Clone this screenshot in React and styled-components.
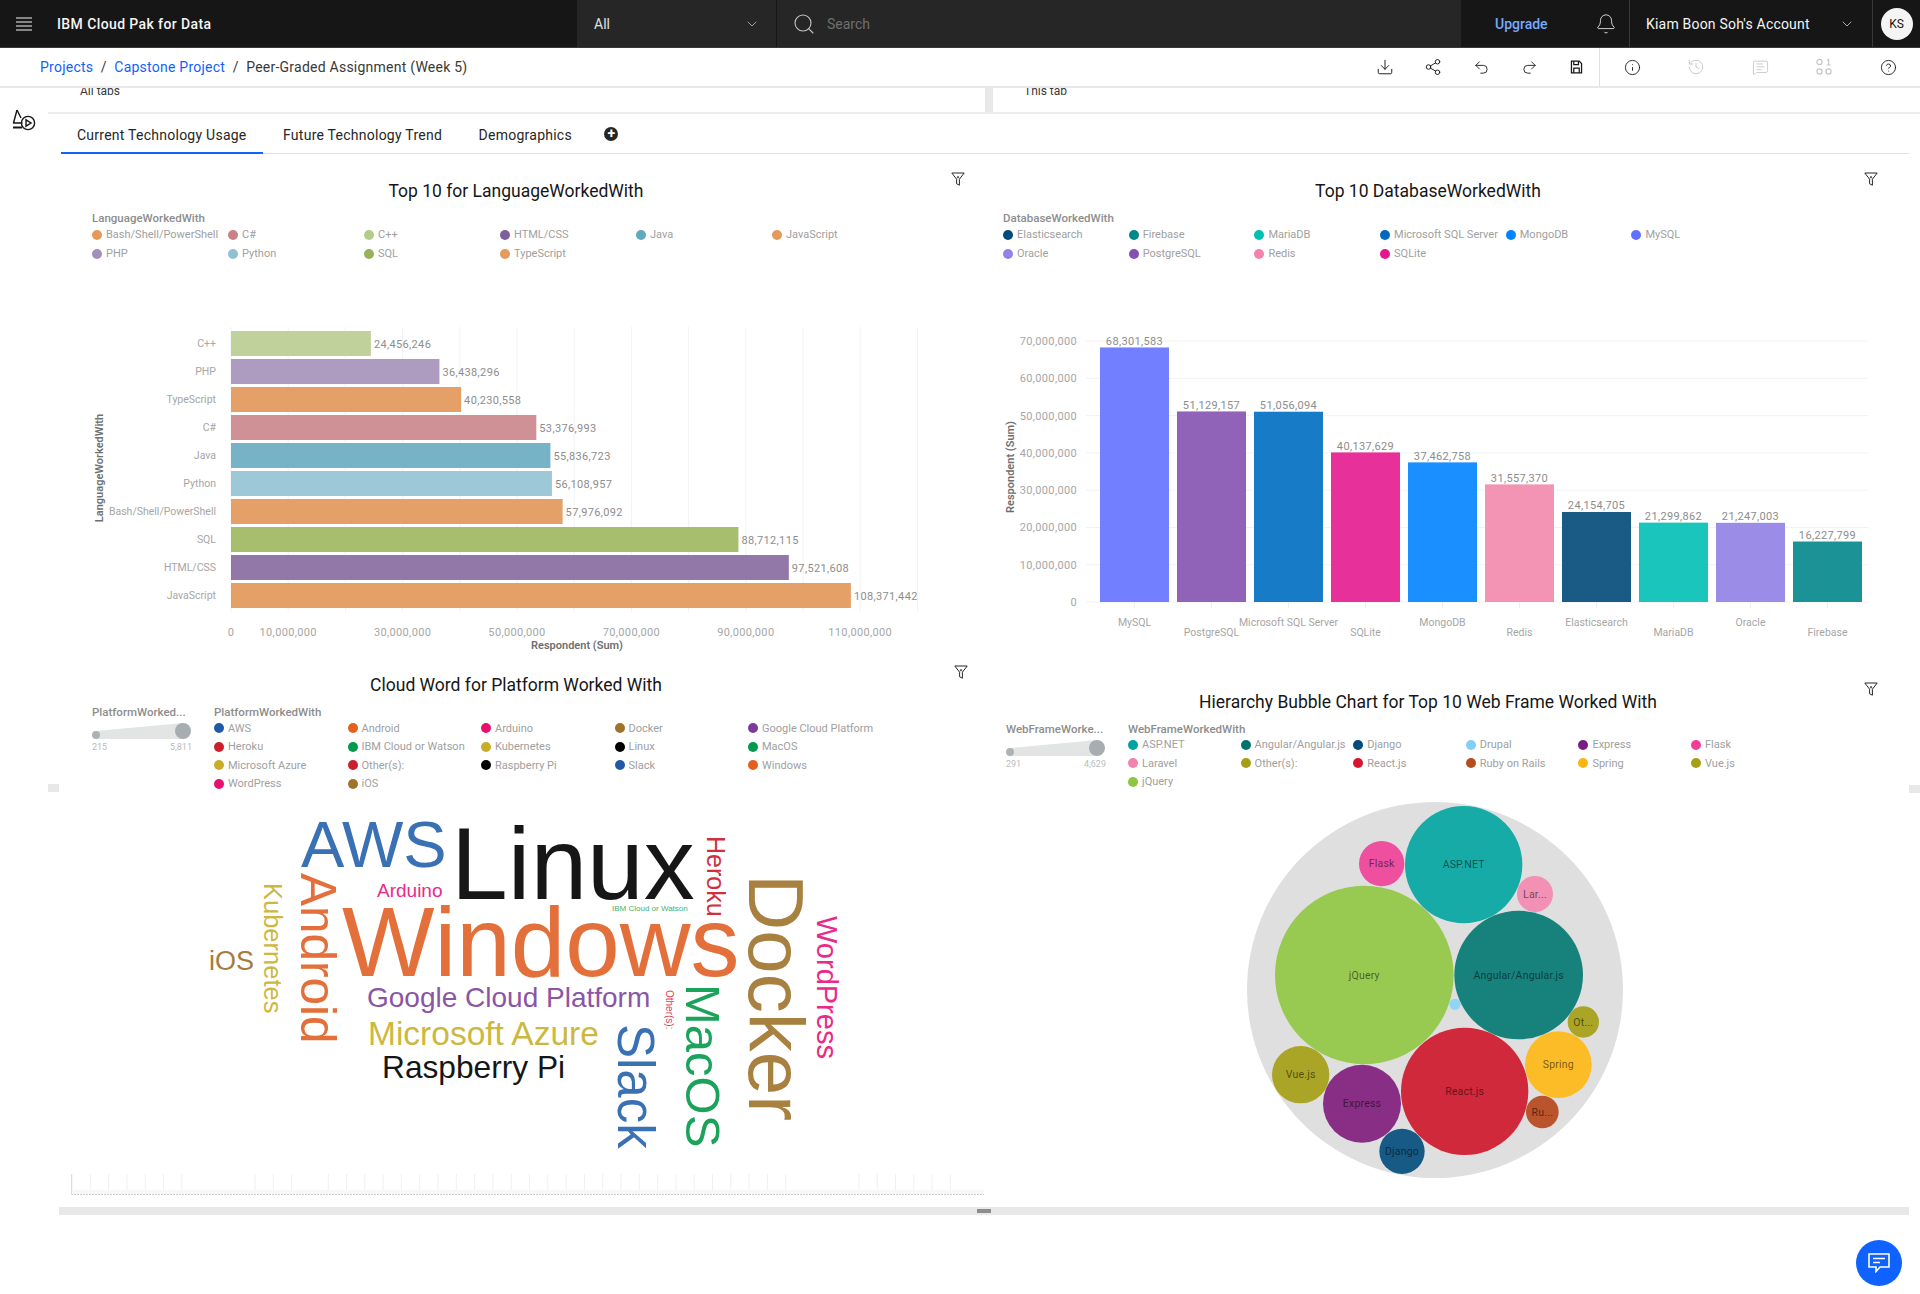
import React from 'react'
import styled, { createGlobalStyle } from 'styled-components'
import {
  Bell, ChevronDown, CircleHelp, Download, History, Info, MessageSquareText,
  Redo2, Search, Share2, Undo2,
} from 'lucide-react'

const FONT = `Roboto, "Liberation Sans", sans-serif`

const languages = [
  ['C++', 24456246, '#c0d19b'],
  ['PHP', 36438296, '#ae9cc0'],
  ['TypeScript', 40230558, '#e4a066'],
  ['C#', 53376993, '#cf9195'],
  ['Java', 55836723, '#76b3c6'],
  ['Python', 56108957, '#9cc8d8'],
  ['Bash/Shell/PowerShell', 57976092, '#e4a066'],
  ['SQL', 88712115, '#a7be6e'],
  ['HTML/CSS', 97521608, '#9178a8'],
  ['JavaScript', 108371442, '#e4a066'],
]

const databases = [
  ['MySQL', 68301583, '#7280ff'],
  ['PostgreSQL', 51129157, '#9063b8'],
  ['Microsoft SQL Server', 51056094, '#187bc8'],
  ['SQLite', 40137629, '#e8309a'],
  ['MongoDB', 37462758, '#1a8fff'],
  ['Redis', 31557370, '#f494b5'],
  ['Elasticsearch', 24154705, '#195b85'],
  ['MariaDB', 21299862, '#1ac5bb'],
  ['Oracle', 21247003, '#9b8ce8'],
  ['Firebase', 16227799, '#1a9296'],
]

const languageLegend = [
  ['Bash/Shell/PowerShell', '#e5995a'], ['C#', '#cb8086'], ['C++', '#b5cb8b'], ['HTML/CSS', '#7d5f9c'],
  ['Java', '#61a9bf'], ['JavaScript', '#e5995a'], ['PHP', '#a48fba'], ['Python', '#8ec1d3'],
  ['SQL', '#97b35a'], ['TypeScript', '#e5995a'],
]
const databaseLegend = [
  ['Elasticsearch', '#004b7c'], ['Firebase', '#00878c'], ['MariaDB', '#00bfb3'], ['Microsoft SQL Server', '#0069bf'],
  ['MongoDB', '#0083ff'], ['MySQL', '#6170ff'], ['Oracle', '#9283ea'], ['PostgreSQL', '#8450b2'],
  ['Redis', '#f383ac'], ['SQLite', '#e6178e'],
]
const platformLegend = [
  ['AWS', '#2159a8'], ['Android', '#e3601f'], ['Arduino', '#e8106f'], ['Docker', '#a0722a'], ['Google Cloud Platform', '#7b3a9c'],
  ['Heroku', '#cb1f2b'], ['IBM Cloud or Watson', '#009a4c'], ['Kubernetes', '#c8ae28'], ['Linux', '#000000'], ['MacOS', '#009a4c'],
  ['Microsoft Azure', '#c8ae28'], ['Other(s):', '#cb1f2b'], ['Raspberry Pi', '#000000'], ['Slack', '#2159a8'], ['Windows', '#e3601f'],
  ['WordPress', '#e8106f'], ['iOS', '#a0722a'],
]
const webLegend = [
  ['ASP.NET', '#00a3a1'], ['Angular/Angular.js', '#00736e'], ['Django', '#004b7c'], ['Drupal', '#82cff5'], ['Express', '#7a1c82'], ['Flask', '#ef3f98'],
  ['Laravel', '#f383ac'], ['Other(s):', '#a79f13'], ['React.js', '#d8152f'], ['Ruby on Rails', '#b44c1f'], ['Spring', '#fdb515'], ['Vue.js', '#a79f13'],
  ['jQuery', '#8dc63f'],
]

const words = [
  ['AWS', 301, 867, 65, '#3a70b4'],
  ['Linux', 451, 899, 102, '#161616'],
  ['Windows', 342, 976, 98, '#e36f3a'],
  ['Arduino', 377, 897, 19, '#ea2a8a'],
  ['IBM Cloud or Watson', 612, 911, 8, '#3cb371'],
  ['Google Cloud Platform', 367, 1007, 28, '#8b55a5'],
  ['Microsoft Azure', 368, 1045, 33.5, '#cdb83f'],
  ['Raspberry Pi', 382, 1078, 31.7, '#161616'],
  ['iOS', 209, 970, 27, '#a67c3a'],
]
const sideWords = [
  ['Kubernetes', 264, 883, 25.5, '#cdb83f'],
  ['Android', 301, 873, 49.5, '#e36f3a'],
  ['Heroku', 707, 836, 25, '#cf2f3e'],
  ['Docker', 749, 874, 78, '#a8803f'],
  ['WordPress', 817, 916, 29, '#ea2a8a'],
  ['MacOS', 686, 984, 49, '#1ba35c'],
  ['Slack', 618, 1024, 51, '#3a70b4'],
  ['Other(s):', 666, 990, 10, '#e0405a'],
]

const bubbles = [
  ['ASP.NET', 701, 221, 176, '#16aba7'],
  ['Flask', 455, 218, 68, '#ee4f9f'],
  ['Lar...', 915, 309, 54, '#f291b3'],
  ['jQuery', 403, 552, 268, '#98ca52'],
  ['Angular/Angular.js', 866, 552, 193, '#17827c'],
  ['', 675, 640, 17, '#91d5f5'],
  ['Ot...', 1060, 693, 47, '#aaa427'],
  ['Spring', 985, 821, 100, '#fcbc28'],
  ['Ru...', 937, 963, 49, '#b9542c'],
  ['React.js', 704, 901, 191, '#d0293b'],
  ['Vue.js', 212, 851, 86, '#aaa427'],
  ['Express', 396, 938, 117, '#882e85'],
  ['Django', 516, 1081, 68, '#165a85'],
]

const skippedTicks = [7, 8, 9, 13, 40, 41, 42]
const fmt = (n) => n.toLocaleString('en-US')

const GlobalStyle = createGlobalStyle`
  html, body { margin: 0; padding: 0; background: #fff; }
  body { font-family: ${FONT}; color: #161616; overflow: hidden; }
  * { box-sizing: border-box; }
`

const Page = styled.div`
  width: 1920px;
  height: 1294px;
  position: relative;
  overflow: hidden;
`

const TopBar = styled.header`
  height: 48px;
  display: flex;
  background: #161616;
  border-bottom: 1px solid #393939;
  color: #f4f4f4;
  font-size: 14px;
`
const Brand = styled.div`
  width: 577px;
  display: flex;
  align-items: center;
  gap: 25px;
  padding-left: 16px;
  font-weight: 500;
  letter-spacing: 0.4px;
`
const ScopeSelect = styled.div`
  width: 200px;
  display: flex;
  align-items: center;
  justify-content: space-between;
  padding: 0 16px 0 17px;
  background: #262626;
  border-right: 1px solid #161616;
  color: #e0e0e0;
`
const SearchBox = styled.div`
  width: 684px;
  display: flex;
  align-items: center;
  gap: 11px;
  padding-left: 15px;
  background: #262626;
  color: #6f6f6f;
`
const UpgradeArea = styled.div`
  width: 169px;
  display: flex;
  align-items: center;
  gap: 47px;
  padding-left: 34px;
  border-right: 1px solid #393939;
`
const UpgradeLink = styled.span`
  color: #78a9ff;
  font-weight: 500;
`
const Account = styled.div`
  width: 243px;
  display: flex;
  align-items: center;
  justify-content: space-between;
  padding: 0 17px 0 16px;
  border-right: 1px solid #393939;
  letter-spacing: 0.2px;
`
const AvatarCell = styled.div`
  flex: 1;
  display: flex;
  align-items: center;
  justify-content: center;
`
const Avatar = styled.div`
  width: 32px;
  height: 32px;
  border-radius: 50%;
  background: #f4f4f4;
  color: #161616;
  font-size: 12px;
  display: flex;
  align-items: center;
  justify-content: center;
`

const CrumbBar = styled.nav`
  height: 40px;
  display: flex;
  align-items: center;
  justify-content: space-between;
  border-bottom: 2px solid #e8e8e8;
  padding-left: 40px;
  font-size: 14px;
`
const Crumbs = styled.div`
  display: flex;
  gap: 7.5px;
  letter-spacing: 0.24px;
  margin-top: -1px;
`
const Crumb = styled.span`
  color: ${(p) => (p.$link ? '#0f62fe' : '#393939')};
`
const Tools = styled.div`
  display: flex;
  height: 100%;
  border-right: ${(p) => (p.$divided ? '1px solid #e0e0e0' : 'none')};
`
const ToolsWrap = styled.div`
  display: flex;
  height: 100%;
`
const ToolButton = styled.div`
  width: ${(p) => p.$w}px;
  height: 100%;
  display: flex;
  align-items: center;
  justify-content: center;
  color: ${(p) => (p.$muted ? '#c6c6c6' : '#161616')};
`

const Body = styled.div`
  display: flex;
`
const Rail = styled.aside`
  width: 48px;
  padding: 21px 0 0 12px;
  color: #161616;
`
const Main = styled.main`
  width: 1872px;
  position: relative;
`
const TabStrip = styled.div`
  height: 26px;
  display: flex;
  overflow: hidden;
  border-bottom: 2px solid #ededed;
  font-size: 12px;
  color: #393939;
`
const StripPane = styled.div`
  width: ${(p) => p.$w}px;
  padding-left: ${(p) => p.$pad}px;
  margin-top: -4.5px;
`
const Splitter = styled.div`
  width: 8px;
  background: #e8e8e8;
`
const TabBar = styled.div`
  height: 40px;
  margin: 0 11px 0 13px;
  display: flex;
  gap: 4.5px;
  border-bottom: 1px solid #e0e0e0;
  font-size: 14px;
`
const Tab = styled.div`
  height: 40px;
  padding: 3px 16px 0;
  display: flex;
  align-items: center;
  letter-spacing: 0.25px;
  color: #262626;
  border-bottom: 2px solid ${(p) => (p.$active ? '#0f62fe' : 'transparent')};
`
const AddTab = styled.div`
  width: 14px;
  height: 14px;
  margin: 13px 0 0 12px;
  border-radius: 50%;
  background: #262626;
  color: #fff;
  font-size: 14px;
  line-height: 13px;
  font-weight: 700;
  text-align: center;
`

const Dashboard = styled.div`
  display: grid;
  grid-template-columns: 912px 912px;
  grid-template-rows: 507px 539px;
  margin-left: 12px;
`
const Tile = styled.section`
  position: relative;
  padding-top: ${(p) => p.$top}px;
`
const TileTitle = styled.h2`
  margin: 0;
  height: 22px;
  font-size: 17.5px;
  line-height: 22px;
  font-weight: 400;
  text-align: center;
  color: #161616;
`
const FilterMark = styled.div`
  position: absolute;
  top: ${(p) => p.$top}px;
  right: ${(p) => p.$right}px;
  line-height: 0;
  color: #262626;
`
const LegendRow = styled.div`
  display: flex;
  margin-top: ${(p) => p.$gap}px;
  height: ${(p) => p.$height}px;
  padding-left: ${(p) => p.$pad}px;
`
const SliderColumn = styled.div`
  width: 122px;
`
const SliderValues = styled.div`
  width: 100px;
  height: 10px;
  margin-top: 1px;
  display: flex;
  justify-content: space-between;
  font-size: 9px;
  line-height: 10px;
  color: #bbb;
`
const LegendTitle = styled.div`
  height: 14px;
  font-size: 11.5px;
  line-height: 14px;
  font-weight: 500;
  color: #8d8d8d;
  white-space: nowrap;
`
const LegendBody = styled.div`
  display: grid;
  grid-template-columns: repeat(${(p) => p.$cols}, ${(p) => p.$col}px);
  grid-auto-rows: ${(p) => p.$row}px;
`
const LegendItem = styled.div`
  display: flex;
  align-items: center;
  gap: 4px;
  font-size: 11px;
  color: #a0a0a0;
  white-space: nowrap;
`
const Dot = styled.span`
  width: 10px;
  height: 10px;
  border-radius: 50%;
  flex: none;
  background: ${(p) => p.$color};
`
const ChartSvg = styled.svg`
  display: block;
  overflow: visible;
  text {
    font-family: ${FONT};
  }
`
const AxisLabel = styled.text`
  font-size: 11px;
  fill: #a6a6a6;
  letter-spacing: 0.35px;
`
const CategoryLabel = styled.text`
  font-size: 10.5px;
  fill: #a6a6a6;
`
const ValueLabel = styled.text`
  font-size: 11px;
  fill: #8d8d8d;
  letter-spacing: 0.35px;
`
const AxisTitle = styled.text`
  font-size: 11px;
  font-weight: 600;
  fill: #6f6f6f;
`
const CloudWord = styled.text`
  && {
    font-family: "Liberation Sans", Arial, sans-serif;
  }
`
const BubbleLabel = styled.text`
  font-size: 10.5px;
  fill: rgba(0, 0, 0, 0.55);
  letter-spacing: 0.2px;
`
const ResizeBar = styled.div`
  width: 1850px;
  height: 8px;
  margin: 7px 0 0 11px;
  background: #e8e8e8;
  display: flex;
  align-items: center;
  justify-content: center;
`
const ResizeGrip = styled.div`
  width: 14px;
  height: 4px;
  margin-right: 1px;
  background: #8d8d8d;
`
const SideHandle = styled.div`
  position: absolute;
  top: ${(p) => p.$top}px;
  left: ${(p) => p.$left}px;
  width: 11px;
  height: 8px;
  background: #e8e8e8;
`
const ChatButton = styled.div`
  position: absolute;
  left: 1856px;
  top: 1240px;
  width: 46px;
  height: 46px;
  border-radius: 50%;
  background: #0f62fe;
  color: #fff;
  display: flex;
  align-items: center;
  justify-content: center;
`

const MenuIcon = () => (
  <svg width="16" height="14" viewBox="0 0 16 14" stroke="currentColor" strokeWidth="1.2">
    <path d="M0 1h16M0 5h16M0 9h16M0 13h16" />
  </svg>
)
const FloppyIcon = () => (
  <svg width="13" height="14" viewBox="0 0 16 18" fill="none" stroke="currentColor" strokeWidth="1.6">
    <path d="M1.5 1.5h10l3 3v12h-13z" />
    <path d="M4.5 1.5v4.5h6V1.5M4.5 16.5v-6h7v6" />
  </svg>
)
const BitsIcon = () => (
  <svg width="16" height="18" viewBox="0 0 16 18" fill="none" stroke="currentColor" strokeWidth="1.2">
    <circle cx="3.5" cy="4" r="2.6" />
    <path d="M11 2.2 12.6 1.4V7M10.6 7h4" />
    <circle cx="3.5" cy="13.5" r="2.6" />
    <circle cx="12.5" cy="13.5" r="2.6" />
  </svg>
)
const RailIcon = () => (
  <svg width="24" height="22" viewBox="0 0 24 22" fill="none" stroke="currentColor" strokeWidth="1.4">
    <path d="M5 1 1.5 14h9" strokeLinejoin="round" />
    <path d="M5 1l4 8" />
    <path d="M1 18.5h9" strokeWidth="2" />
    <circle cx="16" cy="14" r="6.6" />
    <path d="M14 10.8v6.4l5-3.2z" />
  </svg>
)
const FilterIcon = () => (
  <svg width="14" height="14" viewBox="0 0 14 14" fill="none" stroke="currentColor" strokeWidth="1">
    <path d="M.8 1h12.4L8.4 7.2v6l-2.8-1.4V7.2z" />
    <path d="M7 4v2.4M5.8 5.2h2.4" strokeWidth=".8" />
  </svg>
)
const ChatIcon = () => (
  <svg width="22" height="20" viewBox="0 0 22 20" fill="none" stroke="currentColor" strokeWidth="1.6">
    <path d="M1 1h20v13H12l-4 4.5V14H1z" />
    <path d="M5 5.5h12M5 9.5h7" />
  </svg>
)

const Slider = ({ low, high }) => (
  <>
    <svg width="100" height="22" viewBox="0 0 100 22" style={{ display: 'block' }}>
      <path d="M4 12 91 4v16H4z" fill="#e3e5e4" />
      <circle cx="4" cy="16" r="4" fill="#aeb2b5" />
      <circle cx="91" cy="12" r="8" fill="#a8adb0" />
    </svg>
    <SliderValues><span>{low}</span><span>{high}</span></SliderValues>
  </>
)

const Legend = ({ title, items, col, row, cols = 6 }) => (
  <div>
    <LegendTitle>{title}</LegendTitle>
    <LegendBody $col={col} $row={row} $cols={cols}>
      {items.map(([name, color]) => (
        <LegendItem key={name}><Dot $color={color} />{name}</LegendItem>
      ))}
    </LegendBody>
  </div>
)

const LanguageChart = () => {
  const ticks = Array.from({ length: 13 }, (_, i) => i)
  return (
    <ChartSvg width="912" height="360" viewBox="60 300 912 360">
      {ticks.map((i) => (
        <line key={i} x1={231 + i * 57.2} x2={231 + i * 57.2} y1="327" y2="612" stroke="#f2f2f2" />
      ))}
      {languages.map(([name, value, color], i) => {
        const y = 331 + i * 28
        const w = (value / 10000000) * 57.2
        return (
          <g key={name}>
            <CategoryLabel x="216" y={y + 16} textAnchor="end">{name}</CategoryLabel>
            <rect x="231" y={y} width={w} height="25" fill={color} />
            <ValueLabel x={231 + w + 3} y={y + 16.5}>{fmt(value)}</ValueLabel>
          </g>
        )
      })}
      <AxisLabel x="231" y="636" textAnchor="middle">0</AxisLabel>
      {[1, 3, 5, 7, 9, 11].map((n) => (
        <AxisLabel key={n} x={231 + n * 57.2} y="636" textAnchor="middle">{fmt(n * 10000000)}</AxisLabel>
      ))}
      <AxisTitle x="577" y="649" textAnchor="middle">Respondent (Sum)</AxisTitle>
      <AxisTitle transform="translate(103 468) rotate(-90)" textAnchor="middle">LanguageWorkedWith</AxisTitle>
    </ChartSvg>
  )
}

const DatabaseChart = () => {
  const ticks = Array.from({ length: 8 }, (_, i) => i)
  return (
    <ChartSvg width="912" height="360" viewBox="972 300 912 360">
      {ticks.map((i) => {
        const y = 602 - i * 37.27
        return (
          <g key={i}>
            <line x1="1086" x2="1868" y1={y} y2={y} stroke="#f2f2f2" />
            <AxisLabel x="1077" y={y + 4} textAnchor="end">{fmt(i * 10000000)}</AxisLabel>
          </g>
        )
      })}
      {databases.map(([name, value, color], i) => {
        const x = 1100 + i * 77
        const h = (value / 10000000) * 37.27
        return (
          <g key={name}>
            <line x1={x + 34.5} x2={x + 34.5} y1="602" y2="608" stroke="#eee" />
            <rect x={x} y={602 - h} width="69" height={h} fill={color} />
            <ValueLabel x={x + 34.5} y={602 - h - 2.5} textAnchor="middle">{fmt(value)}</ValueLabel>
            <CategoryLabel x={x + 34.5} y={i % 2 ? 636 : 626} textAnchor="middle">{name}</CategoryLabel>
          </g>
        )
      })}
      <AxisTitle transform="translate(1014 467) rotate(-90)" textAnchor="middle">Respondent (Sum)</AxisTitle>
    </ChartSvg>
  )
}

const WordCloud = () => {
  const ticks = Array.from({ length: 49 }, (_, i) => i).filter((i) => !skippedTicks.includes(i))
  return (
    <ChartSvg width="912" height="400" viewBox="60 800 912 400">
      {words.map(([text, x, y, size, color]) => (
        <CloudWord key={text} x={x} y={y} fontSize={size} fill={color}>{text}</CloudWord>
      ))}
      {sideWords.map(([text, x, y, size, color]) => (
        <CloudWord key={text} transform={`translate(${x} ${y}) rotate(90)`} fontSize={size} fill={color}>{text}</CloudWord>
      ))}
      {ticks.map((i) => (
        <line key={i} x1={72 + i * 18.3} x2={72 + i * 18.3} y1="1174" y2="1194" stroke="#f0f0f0" />
      ))}
      <rect x="71" y="1190" width="913" height="4" fill="#f7f7f7" />
      <line x1="71" x2="984" y1="1194.5" y2="1194.5" stroke="#ccc" strokeDasharray="2 1" />
      <line x1="71.5" x2="71.5" y1="1174" y2="1195" stroke="#ddd" />
    </ChartSvg>
  )
}

const BubbleChart = () => (
  <ChartSvg width="912" height="400" viewBox="972 800 912 400">
    <circle cx="1435" cy="990" r="188" fill="#dfdfdf" />
    {bubbles.map(([label, cx, cy, r, color]) => (
      <g key={`${label}${cx}`}>
        <circle cx={1230 + cx / 3} cy={791 + cy / 3} r={r / 3} fill={color} />
        {label && (
          <BubbleLabel x={1230 + cx / 3} y={791 + cy / 3 + 3.5} textAnchor="middle">{label}</BubbleLabel>
        )}
      </g>
    ))}
  </ChartSvg>
)

export default function App() {
  return (
    <Page>
      <GlobalStyle />
      <TopBar>
        <Brand><MenuIcon />IBM Cloud Pak for Data</Brand>
        <ScopeSelect>All<ChevronDown size={16} strokeWidth={1} /></ScopeSelect>
        <SearchBox><Search size={24} strokeWidth={1.1} color="#c6c6c6" />Search</SearchBox>
        <UpgradeArea>
          <UpgradeLink>Upgrade</UpgradeLink>
          <Bell size={22} strokeWidth={1} color="#e0e0e0" />
        </UpgradeArea>
        <Account>Kiam Boon Soh's Account<ChevronDown size={16} strokeWidth={1} /></Account>
        <AvatarCell><Avatar>KS</Avatar></AvatarCell>
      </TopBar>

      <CrumbBar>
        <Crumbs>
          <Crumb $link>Projects</Crumb><Crumb>/</Crumb>
          <Crumb $link>Capstone Project</Crumb><Crumb>/</Crumb>
          <Crumb>Peer-Graded Assignment (Week 5)</Crumb>
        </Crumbs>
        <ToolsWrap>
          <Tools $divided>
            <ToolButton $w={48}><Download size={18} strokeWidth={1.25} /></ToolButton>
            <ToolButton $w={48}><Share2 size={18} strokeWidth={1.25} /></ToolButton>
            <ToolButton $w={48}><Undo2 size={17} strokeWidth={1.25} /></ToolButton>
            <ToolButton $w={48}><Redo2 size={17} strokeWidth={1.25} /></ToolButton>
            <ToolButton $w={46}><FloppyIcon /></ToolButton>
          </Tools>
          <Tools>
            <ToolButton $w={64}><Info size={17} strokeWidth={1.25} /></ToolButton>
            <ToolButton $w={64} $muted><History size={18} strokeWidth={1.25} /></ToolButton>
            <ToolButton $w={64} $muted><MessageSquareText size={17} strokeWidth={1.25} /></ToolButton>
            <ToolButton $w={64} $muted><BitsIcon /></ToolButton>
            <ToolButton $w={64}><CircleHelp size={17} strokeWidth={1.25} /></ToolButton>
          </Tools>
        </ToolsWrap>
      </CrumbBar>

      <Body>
        <Rail><RailIcon /></Rail>
        <Main>
          <TabStrip>
            <StripPane $w={937} $pad={32}>All tabs</StripPane>
            <Splitter />
            <StripPane $w={927} $pad={31}>This tab</StripPane>
          </TabStrip>
          <TabBar>
            <Tab $active>Current Technology Usage</Tab>
            <Tab>Future Technology Trend</Tab>
            <Tab>Demographics</Tab>
            <AddTab>+</AddTab>
          </TabBar>

          <Dashboard>
            <Tile $top={26}>
              <TileTitle>Top 10 for LanguageWorkedWith</TileTitle>
              <FilterMark $top={18} $right={7}><FilterIcon /></FilterMark>
              <LegendRow $gap={9} $height={89} $pad={32}>
                <Legend title="LanguageWorkedWith" items={languageLegend} col={136} row={19} />
              </LegendRow>
              <LanguageChart />
            </Tile>
            <Tile $top={26}>
              <TileTitle>Top 10 DatabaseWorkedWith</TileTitle>
              <FilterMark $top={18} $right={6}><FilterIcon /></FilterMark>
              <LegendRow $gap={9} $height={89} $pad={31}>
                <Legend title="DatabaseWorkedWith" items={databaseLegend} col={125.7} row={19} />
              </LegendRow>
              <DatabaseChart />
            </Tile>
            <Tile $top={13}>
              <TileTitle>Cloud Word for Platform Worked With</TileTitle>
              <FilterMark $top={4} $right={4}><FilterIcon /></FilterMark>
              <LegendRow $gap={9} $height={95} $pad={32}>
                <SliderColumn>
                  <LegendTitle>PlatformWorked...</LegendTitle>
                  <Slider low="215" high="5,811" />
                </SliderColumn>
                <Legend title="PlatformWorkedWith" items={platformLegend} col={133.5} row={18.5} cols={5} />
              </LegendRow>
              <WordCloud />
            </Tile>
            <Tile $top={30}>
              <TileTitle>Hierarchy Bubble Chart for Top 10 Web Frame Worked With</TileTitle>
              <FilterMark $top={21} $right={6}><FilterIcon /></FilterMark>
              <LegendRow $gap={8.5} $height={78.5} $pad={34}>
                <SliderColumn>
                  <LegendTitle>WebFrameWorke...</LegendTitle>
                  <Slider low="291" high="4,629" />
                </SliderColumn>
                <Legend title="WebFrameWorkedWith" items={webLegend} col={112.6} row={18.5} />
              </LegendRow>
              <BubbleChart />
            </Tile>
          </Dashboard>

          <ResizeBar><ResizeGrip /></ResizeBar>
          <SideHandle $top={696} $left={0} />
          <SideHandle $top={697} $left={1861} />
        </Main>
      </Body>

      <ChatButton><ChatIcon /></ChatButton>
    </Page>
  )
}
